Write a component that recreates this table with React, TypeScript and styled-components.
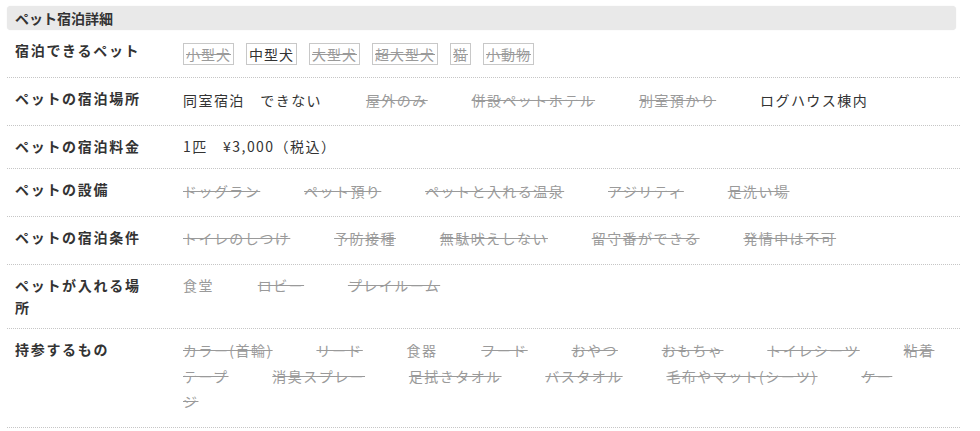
import React from "react";
import styled, { createGlobalStyle } from "styled-components";

type State = "on" | "off" | "mute";
type Entry = [string, State];

const GlobalStyle = createGlobalStyle`
  html, body {
    margin: 0;
    padding: 0;
    background: #fff;
  }
  body {
    font-family: "Noto Sans CJK JP", "Noto Sans", sans-serif;
    color: #333;
  }
`;

// items are separated by ideographic spaces; the trailing gap is glued (nbsp) so it wraps with the last word
const SEP = "\u3000\u3000\u3000";
const TAIL = "\u00A0\u00A0\u00A0";

const petTypes: Entry[] = [
  ["小型犬", "off"],
  ["中型犬", "on"],
  ["大型犬", "off"],
  ["超大型犬", "off"],
  ["猫", "off"],
  ["小動物", "off"],
];

interface IRow {
  label: string;
  items: Entry[];
  pad: [number, number];
}

const rows: IRow[] = [
  {
    label: "ペットの宿泊場所",
    pad: [10, 11],
    items: [
      ["同室宿泊\u3000できない", "on"],
      ["屋外のみ", "off"],
      ["併設ペットホテル", "off"],
      ["別室預かり", "off"],
      ["ログハウス棟内", "on"],
    ],
  },
];

const afterFee: IRow[] = [
  {
    label: "ペットの設備",
    pad: [10, 11],
    items: [
      ["ドッグラン", "off"],
      ["ペット預り", "off"],
      ["ペットと入れる温泉", "off"],
      ["アジリティ", "off"],
      ["足洗い場", "off"],
    ],
  },
  {
    label: "ペットの宿泊条件",
    pad: [9, 13],
    items: [
      ["トイレのしつけ", "off"],
      ["予防接種", "off"],
      ["無駄吠えしない", "off"],
      ["留守番ができる", "off"],
      ["発情中は不可", "off"],
    ],
  },
  {
    label: "ペットが入れる場所",
    pad: [8, 8],
    items: [
      ["食堂", "mute"],
      ["ロビー", "off"],
      ["プレイルーム", "off"],
    ],
  },
  {
    label: "持参するもの",
    pad: [9, 12.5],
    items: [
      ["カラー(首輪)", "off"],
      ["リード", "off"],
      ["食器", "mute"],
      ["フード", "off"],
      ["おやつ", "off"],
      ["おもちゃ", "off"],
      ["トイレシーツ", "off"],
      ["粘着テープ", "off"],
      ["消臭スプレー", "off"],
      ["足拭きタオル", "off"],
      ["バスタオル", "off"],
      ["毛布やマット(シーツ)", "off"],
      ["ケージ", "off"],
    ],
  },
];

function ItemList({ items, pad }: { items: Entry[]; pad: [number, number] }) {
  return (
    <Value $top={pad[0]} $bottom={pad[1]}>
      {items.map(([text, state], i) => (
        <React.Fragment key={text}>
          {i > 0 && <Sep>{SEP}</Sep>}
          <Item $state={state}>{text}</Item>
        </React.Fragment>
      ))}
      <Tail>{TAIL}</Tail>
    </Value>
  );
}

export default function App() {
  return (
    <Wrapper>
      <GlobalStyle />
      <Heading>ペット宿泊詳細</Heading>

      <Row>
        <Label>宿泊できるペット</Label>
        <TagList>
          {petTypes.map(([text, state]) => (
            <Tag key={text} $state={state}>
              {text}
            </Tag>
          ))}
        </TagList>
      </Row>

      {rows.map((row) => (
        <Row key={row.label}>
          <Label>{row.label}</Label>
          <ItemList items={row.items} pad={row.pad} />
        </Row>
      ))}

      <Row>
        <Label>ペットの宿泊料金</Label>
        <Value $top={8} $bottom={9}>
          1匹　¥3,000（税込）
        </Value>
      </Row>

      {afterFee.map((row) => (
        <Row key={row.label}>
          <Label>{row.label}</Label>
          <ItemList items={row.items} pad={row.pad} />
        </Row>
      ))}
    </Wrapper>
  );
}

const stateColor = (s: State) => (s === "on" ? "#333" : "#9a9a9a");

const Wrapper = styled.div`
  padding: 6px 20px 0 7px;
  width: 953px;
`;

const Heading = styled.div`
  height: 24px;
  line-height: 24px;
  margin-right: 4px;
  padding-left: 8px;
  background: #e9e9e9;
  border-radius: 4px;
  box-shadow: 0 0 1px rgba(0, 0, 0, 0.12);
  font-size: 14px;
  font-weight: bold;
  color: #333;
`;

const Row = styled.div`
  display: flex;
  align-items: flex-start;
  border-bottom: 1px dotted #c6c6c6;
`;

const Label = styled.div`
  flex: 0 0 176px;
  box-sizing: border-box;
  padding: 9px 33px 10px 8px;
  font-size: 14px;
  line-height: 22px;
  font-weight: bold;
  letter-spacing: 1.7px;
  color: #333;
`;

const Value = styled.div<{ $top: number; $bottom: number }>`
  flex: 1;
  min-width: 0;
  padding: ${({ $top, $bottom }) => `${$top}px 15px ${$bottom}px 0`};
  font-size: 14px;
  line-height: 25.5px;
  letter-spacing: 1.45px;
  color: #333;
`;

const Sep = styled.span`
  letter-spacing: 0.6px;
`;

const Tail = styled.span`
  letter-spacing: 12px;
`;

const Item = styled.span<{ $state: State }>`
  color: ${({ $state }) => stateColor($state)};
  text-decoration: ${({ $state }) => ($state === "off" ? "line-through" : "none")};
`;

const TagList = styled.div`
  flex: 1;
  display: flex;
  flex-wrap: wrap;
  gap: 12px;
  padding: 13px 15px 12px 0;
`;

const Tag = styled.span<{ $state: State }>`
  display: inline-block;
  padding: 0 2px;
  border: 1px solid #c8c8c8;
  font-size: 14px;
  line-height: 20px;
  letter-spacing: 1px;
  color: ${({ $state }) => stateColor($state)};
  text-decoration: ${({ $state }) => ($state === "off" ? "line-through" : "none")};
`;
